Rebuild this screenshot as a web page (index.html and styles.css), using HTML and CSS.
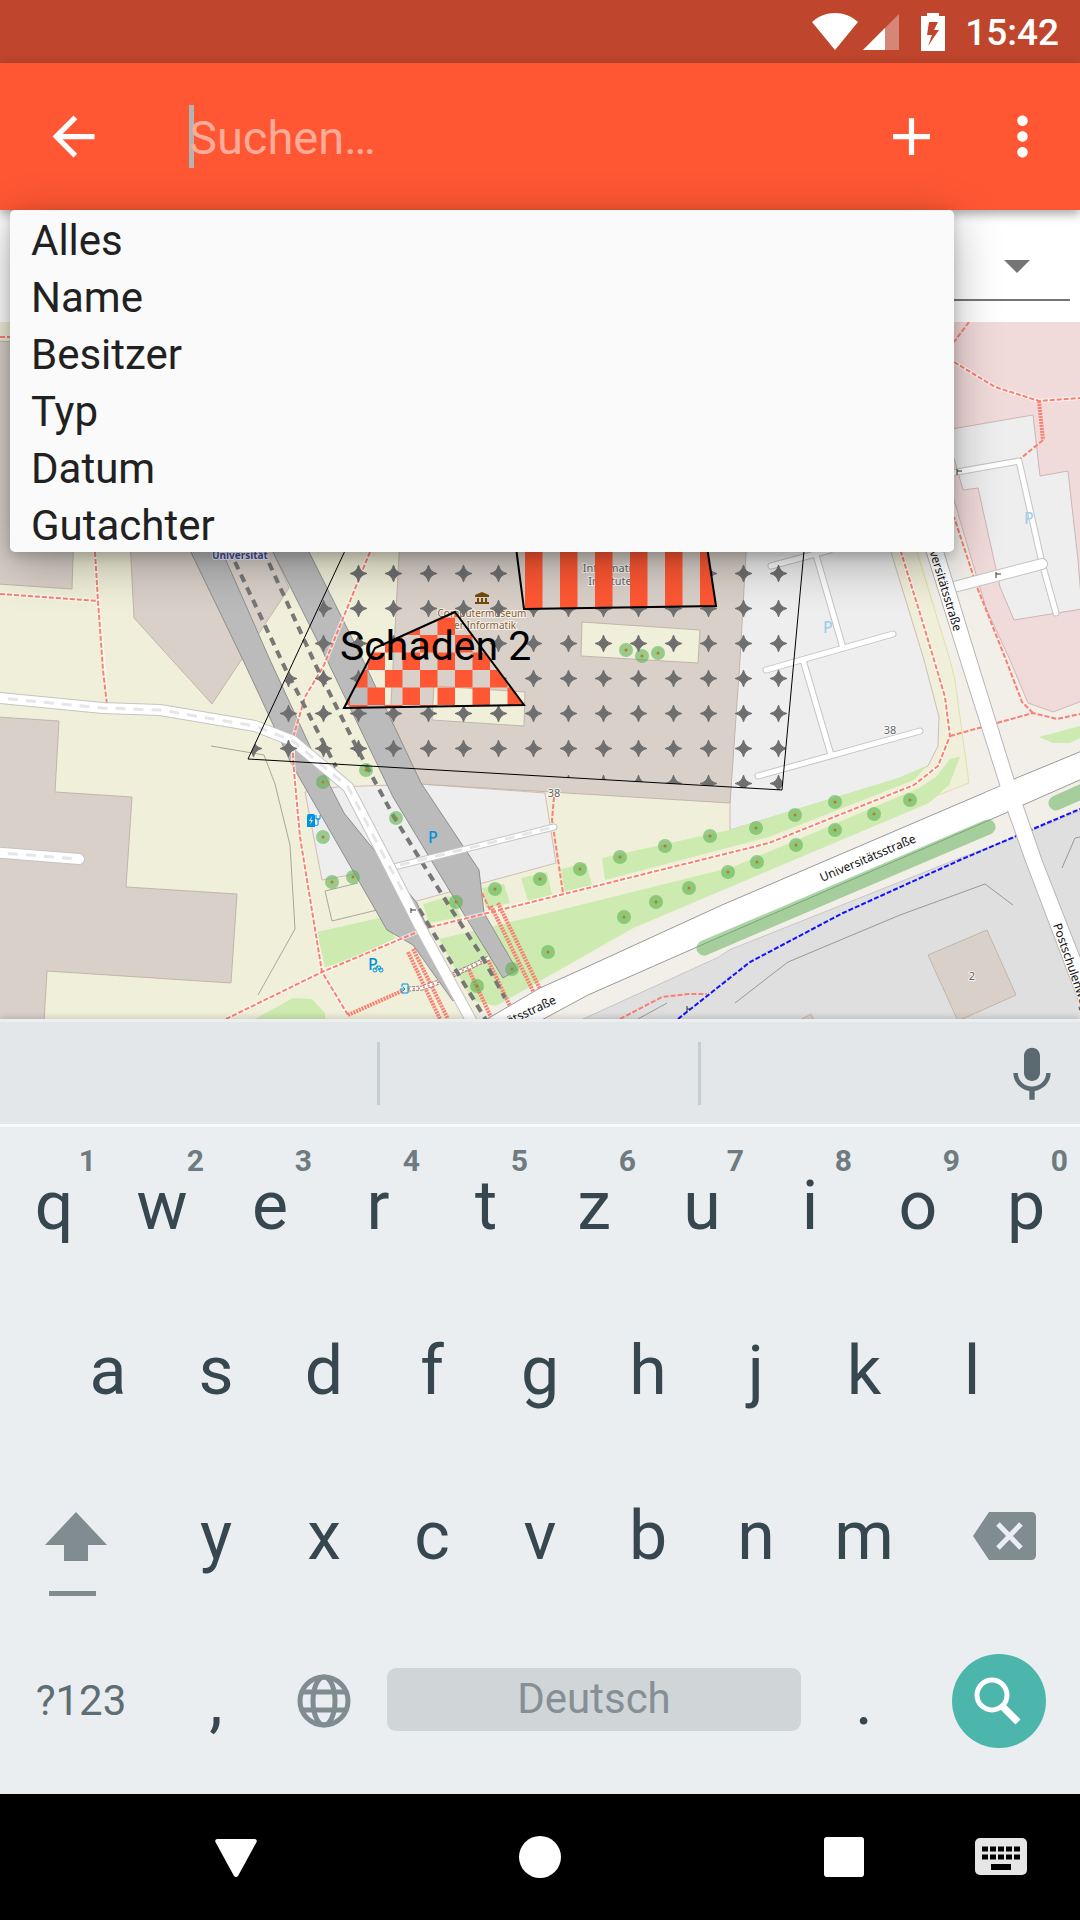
FILE: index.html
```html
<!DOCTYPE html>
<html lang="de">
<head>
<meta charset="utf-8">
<meta name="viewport" content="width=device-width, initial-scale=1">
<title>Suchen</title>
<link rel="stylesheet" href="styles.css">
</head>
<body>
<div class="screen">
  <div class="status">
    <div class="signals">
      <svg width="46" height="38" viewBox="0 0 46 38"><path d="M0 9C13-3 33-3 46 9L23 37z" fill="#fff"/></svg>
      <svg width="36" height="38" viewBox="0 0 36 38"><path d="M0 37L36 1v36z" fill="#fff" opacity=".35"/><path d="M0 37L22 15v22z" fill="#fff"/></svg>
    </div>
    <svg class="battery" width="24" height="38" viewBox="0 0 24 38"><path fill="#fff" fill-rule="evenodd" d="M6 0h12v3h6v35H0V3h6zM8 9L6 22h5L7 33 18 17h-5l4-8z"/></svg>
    <span class="clock">15:42</span>
  </div>

  <header class="toolbar">
    <button class="tool back" aria-label="Zurück"><svg viewBox="0 0 24 24"><path d="M20 11H7.83l5.59-5.59L12 4l-8 8 8 8 1.41-1.41L7.83 13H20v-2z"/></svg></button>
    <input class="search" type="text" placeholder="Suchen…" aria-label="Suchen">
    <button class="tool" aria-label="Hinzufügen"><svg viewBox="0 0 24 24"><path d="M19 13h-6v6h-2v-6H5v-2h6V5h2v6h6v2z"/></svg></button>
    <button class="tool" aria-label="Mehr"><svg viewBox="0 0 24 24"><path d="M12 8c1.1 0 2-.9 2-2s-.9-2-2-2-2 .9-2 2 .9 2 2 2zm0 2c-1.100 0-2 .9-2 2s.9 2 2 2 2-.9 2-2-.9-2-2-2zm0 6c-1.100 0-2 .9-2 2s.9 2 2 2 2-.9 2-2-.9-2-2-2z"/></svg></button>
  </header>

  <div class="filter">
    <select class="spinner" aria-label="Suchfeld">
      <option>Alles</option><option>Name</option><option>Besitzer</option><option>Typ</option><option>Datum</option><option>Gutachter</option>
    </select>
    <svg class="caret" width="26" height="13" viewBox="0 0 26 13"><path d="M0 0h26L13 13z" fill="#757575"/></svg>
    <ul class="popup" role="listbox" aria-label="Suchfeld">
      <li role="option">Alles</li>
      <li role="option">Name</li>
      <li role="option">Besitzer</li>
      <li role="option">Typ</li>
      <li role="option">Datum</li>
      <li role="option">Gutachter</li>
    </ul>
  </div>

  <main class="map">
    <svg class="map-canvas" viewBox="0 322 1080 697" preserveAspectRatio="xMidYMin slice">
      <defs>
        <pattern id="stars" x="26" y="31" width="35" height="35" patternUnits="userSpaceOnUse"><path d="M17.500 9Q19 16 26 17.500Q19 19 17.500 26Q16 19 9 17.500Q16 16 17.500 9z" fill="#6f6f6f" stroke="#6f6f6f" stroke-width="1"/></pattern>
        <pattern id="stripes" x="0" y="0" width="35" height="35" patternUnits="userSpaceOnUse"><rect width="17.500" height="35" fill="#ff5733"/></pattern>
        <pattern id="checks" x="0" y="5" width="35" height="35" patternUnits="userSpaceOnUse"><path d="M0 0h17.500v17.500H0zM17.500 17.500H35V35H17.500z" fill="#ff5733"/></pattern>
      </defs>

      <!-- ground -->
      <rect y="322" width="1080" height="697" fill="#f0efd9"/>
      <path fill="#f2efe9" d="M905 500L950 660 955 680 969 783 936 796 633 930 540 982 470 1019H1080V322H905z"/>
      <path fill="none" stroke="#dfe0a8" stroke-width="1" d="M917 552L950 660 955 680 969 783 936 796"/>
      <path fill="#dfdfdf" stroke="#c6c6c6" stroke-width="1" d="M583 1019L719 957 729 950 960 858 1029 832 1082 810V1022z"/>
      <path fill="#f1dada" stroke="#d3b6b6" stroke-width="1" d="M940 320H1082V701L1053 712 1028 703 1010 660 986 608 954 500 940 460z"/>
      <path fill="#eee" stroke="#ccb6b6" stroke-width="1" d="M940 431L1033 415 1040 476 1068 471 1078 560 1082 609 1014 620 1000 587 978 488 963 490 954 458 940 440z"/>
      <path fill="#eee" stroke="#d0bdb5" stroke-width="1" d="M747 500H875L891 552 924 660 939 717 938 746 928 766 898 779 730 830 730 803z"/>
      <path fill="#eee" stroke="#d0bdb5" stroke-width="1" d="M305 792L337 787 420 784 545 793 556 863 413 902 361 873 322 880z"/>

      <!-- lawns -->
      <g fill="#cdebb0">
        <path d="M317 932L379 918 396 938 345 962 325 967z"/>
        <path d="M423 904L451 896 461 917 429 923z"/>
        <path d="M482 888L504 884 510 903 486 908z"/>
        <path d="M521 878L547 872 552 895 528 901z"/>
        <path d="M561 869L586 863 592 885 565 892z"/>
        <path d="M602 858L729 830 898 778 927 766 914 780 769 837 605 880z"/>
        <path d="M439 939L540 915 733 867 919 788 936 777 950 759 960 757 949 785 929 803 633 928 540 981 496 1006 472 1000z"/>
        <path d="M255 1019L293 998 312 999 325 1013V1019z"/>
        <path d="M1039 737L1080 726V738L1070 743 1053 743z"/>
      </g>

      <!-- buildings -->
      <g fill="#d9d0c9" stroke="#c2b5aa" stroke-width="1">
        <path d="M-2 341L80 346 72 589-2 584z"/>
        <path d="M130 540H268L289 588 212 704 134 618z"/>
        <path d="M-2 717L59 721 55 792 132 797 126 887 237 894 231 983 47 971 44 1022H-2z"/>
        <path d="M402 500H749L740 660 730 803 420 784 385 780 391 703z"/>
        <path d="M987 930L1016 995 958 1021 928 955z"/>
        <path d="M800 1020L811 1014 814 1020z"/>
      </g>
      <g fill="#f0efd9" stroke="#c2b5aa" stroke-width="1">
        <path d="M582 622L700 630 698 663 581 656z"/>
        <path d="M434 686L525 692 524 726 432 720z"/>
      </g>

      <!-- field lines -->
      <g fill="none" stroke="#a9a899" stroke-width="1">
        <path d="M211 746L264 755 275 784 290 845 295 929 258 995"/>
        <path d="M358 883L325 891 332 921 377 910"/>
        <path stroke="#999" d="M1013 905L985 884 900 915 788 962 735 1003M1080 837L1075 838 1062 868M667 1003L638 1019"/>
      </g>

      <!-- tram beds -->
      <g fill="#bbb" stroke="#8f8f8f" stroke-width="1">
        <path d="M185 540L243 660 291 763 387 930 413 945 453 1001 456 998 417 903 344 813 313 753 270 660 217 540z"/>
        <path d="M267 540L327 660 393 797 451 893 503 978 517 970 484 913 479 870 421 783 363 660 303 540z"/>
      </g>

      <!-- foot paths -->
      <g fill="none" stroke="#fff" stroke-opacity=".6" stroke-width="4">
        <path d="M954 362L995 387 1039 401 1080 398M901 552L922 620 945 697 950 736 938 766 914 785 769 843 540 900 427 928 322 972 226 1019M370 552L324 665 305 697 293 738 293 760 300 837 322 972 348 1015M95 552L98 601 107 705M0 594L98 601"/>
      </g>
      <g fill="none" stroke="#fa8072" stroke-width="2" stroke-dasharray="5 2">
        <path d="M969 322L954 342M954 362L995 387 1039 401 1080 398"/>
        <path d="M1043 440L1020 459"/>
        <path d="M889 510L901 552 922 620 934 660 945 697 950 736 938 766 914 785 769 843 540 900 427 928 322 972 226 1019"/>
        <path d="M950 736L1033 713 1057 719 1080 714M1033 713L1022 702 1006 660 977 587 954 517"/>
        <path d="M0 337H12M0 594L98 601M95 552L98 601 103 670 107 705"/>
        <path d="M370 552L324 665 305 697 293 738 293 760 300 837 322 972 348 1015"/>
        <path d="M554 797L552 820 563 893M620 1019L662 997 688 994 707 994M482 893L490 910"/>
      </g>
      <g fill="none" stroke="#fa8072" stroke-width="4" stroke-dasharray="2 1">
        <path d="M1039 401L1043 440M408 952L440 1019M413 949L448 1019M491 906L534 993M498 903L540 989M348 1015L402 991M488 960L510 1006M469 970L491 1017"/>
      </g>
      <g fill="none">
        <path d="M453 975L489 958M408 989L422 988 439 982" stroke="#888" stroke-width="5" stroke-dasharray="3 1"/>
        <path d="M453 975L489 958M408 989L422 988 439 982" stroke="#fff" stroke-width="3"/>
        <path d="M453 975L489 958M408 989L422 988 439 982" stroke="#fa8072" stroke-width="2" stroke-dasharray="2 3"/>
      </g>
      <path fill="none" stroke="#11f" stroke-width="2" stroke-dasharray="5 2" d="M678 1019L750 962 843 913 960 860 1080 809"/>
      <g fill="none" stroke="#777" stroke-width="4" stroke-dasharray="8 6">
        <path d="M235 562L286 670 336 767M419 909L486 1020"/>
        <path d="M269 563L317 668 358 750 394 817 423 864 453 912 480 953 505 998"/>
      </g>

      <!-- streets -->
      <g fill="none" stroke-linecap="round" stroke-linejoin="round">
        <path stroke="#c4c4c4" stroke-width="7" d="M771 566L830 550M816 555L843 648M893 634L766 670M803 660L831 755M758 776L920 731M394 867L554 827M940 475L1019 461 1042 563 1056 613"/>
        <path stroke="#fff" stroke-width="5" d="M771 566L830 550M816 555L843 648M893 634L766 670M803 660L831 755M758 776L920 731M394 867L554 827M940 475L1019 461 1042 563 1056 613"/>
        <path stroke="#c4c4c4" stroke-width="12" d="M950 588L1042 564M-10 697L103 708 160 710 255 726 293 741 348 787 386 860 418 923 472 1022M-10 852L79 859"/>
        <path stroke="#fff" stroke-width="10" d="M950 588L1042 564M-10 697L103 708 160 710 255 726 293 741 348 787 386 860 418 923 472 1022M-10 852L79 859"/>
        <path stroke="#e6e6e6" stroke-width="3" stroke-linecap="butt" stroke-dasharray="10 8" d="M-10 697L103 708 160 710 255 726 293 741 348 787 386 860 406 897M-10 852L79 859M400 865L550 828"/>
      </g>
      <path fill="#fff" stroke="#999" stroke-width="1" d="M487 1019L540 988 578 971 722 905 1000 786 1014 779 1082 751V779L1023 805 1008 812 722 936 588 995 538 1022z"/>
      <path fill="#fff" stroke="#b5b5b5" stroke-width="1" d="M913 510L960 660 1000 786 1008 812 1025 860 1082 1010V962L1042 860 1023 805 1014 779 977 660 931 510z"/>
      <path fill="#fff" d="M985 793L1028 774 1037 798 995 816z"/>
      <g stroke="#5fae57" stroke-opacity=".52" stroke-linecap="round" stroke-width="15">
        <path d="M704 948L988 827M1056 803L1090 788"/>
      </g>

      <!-- trees -->
      <g fill="#5cb050" fill-opacity=".58">
        <circle cx="620" cy="857" r="7"/><circle cx="665" cy="846" r="7"/><circle cx="710" cy="836" r="7"/><circle cx="756" cy="828" r="7"/><circle cx="795" cy="815" r="7"/><circle cx="835" cy="802" r="7"/><circle cx="580" cy="869" r="7"/><circle cx="540" cy="879" r="7"/><circle cx="624" cy="917" r="7"/><circle cx="656" cy="902" r="7"/><circle cx="689" cy="888" r="7"/><circle cx="728" cy="872" r="7"/><circle cx="757" cy="862" r="7"/><circle cx="796" cy="845" r="7"/><circle cx="835" cy="830" r="7"/><circle cx="874" cy="814" r="7"/><circle cx="910" cy="800" r="7"/><circle cx="548" cy="952" r="7"/><circle cx="323" cy="782" r="7"/><circle cx="366" cy="770" r="7"/><circle cx="396" cy="818" r="7"/><circle cx="323" cy="837" r="7"/><circle cx="332" cy="882" r="7"/><circle cx="353" cy="877" r="7"/><circle cx="456" cy="902" r="7"/><circle cx="495" cy="889" r="7"/><circle cx="512" cy="969" r="7"/><circle cx="477" cy="986" r="7"/><circle cx="626" cy="650" r="7"/><circle cx="642" cy="656" r="7"/><circle cx="658" cy="653" r="7"/>
      </g>
      <path stroke="#b27a35" stroke-width="3" stroke-linecap="round" d="M620 857h0M665 846h0M710 836h0M756 828h0M795 815h0M835 802h0M580 869h0M540 879h0M624 917h0M656 902h0M689 888h0M728 872h0M757 862h0M796 845h0M835 830h0M874 814h0M910 800h0M548 952h0M323 782h0M366 770h0M396 818h0M323 837h0M332 882h0M353 877h0M456 902h0M495 889h0M512 969h0M477 986h0M626 650h0M642 656h0M658 653h0"/>

      <!-- map labels and signs -->
      <g class="label">
        <text x="822" y="882" transform="rotate(-23 822 882)">Universitätsstraße</text>
        <text x="954" y="632" text-anchor="end" transform="rotate(73 954 632)">Universitätsstraße</text>
        <text x="557" y="1003" text-anchor="end" transform="rotate(-25 557 1003)">Universitätsstraße</text>
        <text x="1053" y="925" transform="rotate(71 1053 925)">Postschulenweg</text>
      </g>
      <g class="label grey" text-anchor="middle">
        <text x="890" y="734">38</text><text x="554" y="797">38</text><text x="972" y="980">2</text>
        <text x="610" y="572">Informatik</text><text x="610" y="585">Institute</text>
      </g>
      <text class="label station" x="240" y="559" text-anchor="middle">Universität</text>
      <g class="label museum" text-anchor="middle"><text x="482" y="617">Computermuseum</text><text x="482" y="629">der Informatik</text></g>
      <path fill="#734a08" d="M475 595L482 592 489 595V597H475zM477 598h2v4h-2zM481 598h2v4h-2zM485 598h2v4h-2zM475 602h14v2h-14z"/>
      <g class="parking" text-anchor="middle"><text x="433" y="843">P</text><text x="373" y="970">P</text><text class="faded" x="1029" y="524">P</text><text class="faded" x="828" y="633">P</text></g>
      <g fill="none" stroke="#0092da" stroke-width="1"><circle cx="375" cy="970" r="2"/><circle cx="381" cy="970" r="2"/><path d="M375 970L377 966H380L381 970M377 966L379 970"/></g>
      <path fill="none" stroke="#0092da" stroke-width="1" d="M402 987v-3h6v9h-6v-3M400 989h5M403 987l2 2-2 2"/>
      <path fill="#0092da" fill-rule="evenodd" d="M307 816q0-2 2-2h4q2 0 2 2v11h-8zM312 816l-3 5h2l-1 4 3-5h-2z"/>
      <path fill="none" stroke="#0092da" stroke-width="1" d="M315 825q4 2 3-3v-3M316 815v4h4v-4M317 819h2"/>
      <path fill="none" stroke="#333" stroke-width="1" d="M957 469v6M957 471h5M996 572v6M996 574h5M411 908v5M411 910h5M687 1006v6M687 1009h4"/>

      <!-- damage areas -->
      <path fill="url(#stars)" fill-rule="evenodd" d="M346 552L248 759 782 790 804 552zM517 552L524 609 716 606 708 552zM455 612L375 648 344 708 524 705z"/>
      <path fill="none" stroke="#000" stroke-width="1" d="M350 540L248 759 782 790 805 540"/>
      <path fill="url(#stripes)" stroke="#000" stroke-width="2" d="M515 540L524 609 716 606 706 540z"/>
      <path fill="url(#checks)" stroke="#000" stroke-width="2" d="M455 612L375 648 344 708 524 705z"/>
      <text class="damage" x="340" y="660">Schaden 2</text>
    </svg>
  </main>

  <section class="keyboard" aria-label="Tastatur">
    <div class="suggest">
      <button class="word" aria-label="Vorschlag 1"></button>
      <button class="word" aria-label="Vorschlag 2"></button>
      <button class="word voice" aria-label="Spracheingabe"><svg width="64" height="64" viewBox="0 0 24 24" fill="#5a6a70"><path d="M12 15c1.660 0 3-1.340 3-3V5.500c0-1.660-1.340-3-3-3s-3 1.340-3 3V12c0 1.660 1.340 3 3 3zm5.300-3c0 3-2.540 5.100-5.300 5.100S6.700 15 6.700 12H5c0 3.410 2.720 6.230 6 6.720V22h2v-3.280c3.280-.48 6-3.300 6-6.720h-1.700z"/></svg></button>
    </div>
    <div class="keys">
      <div class="row">
        <button class="key">q<span class="hint">1</span></button><button class="key">w<span class="hint">2</span></button><button class="key">e<span class="hint">3</span></button><button class="key">r<span class="hint">4</span></button><button class="key">t<span class="hint">5</span></button><button class="key">z<span class="hint">6</span></button><button class="key">u<span class="hint">7</span></button><button class="key">i<span class="hint">8</span></button><button class="key">o<span class="hint">9</span></button><button class="key">p<span class="hint">0</span></button>
      </div>
      <div class="row inset">
        <button class="key">a</button><button class="key">s</button><button class="key">d</button><button class="key">f</button><button class="key">g</button><button class="key">h</button><button class="key">j</button><button class="key">k</button><button class="key">l</button>
      </div>
      <div class="row">
        <button class="key wide shift" aria-label="Umschalt"><svg width="62" height="120" viewBox="0 0 62 120" fill="#808c90"><path d="M31 36L62 69H43V85H19V69H0zM4 115H51V120H4z"/></svg></button>
        <button class="key">y</button><button class="key">x</button><button class="key">c</button><button class="key">v</button><button class="key">b</button><button class="key">n</button><button class="key">m</button>
        <button class="key wide delete" aria-label="Löschen"><svg width="63" height="48" viewBox="0 0 63 48"><path fill="#808c90" d="M16 0H58Q63 0 63 5V43Q63 48 58 48H16L0 24z"/><path fill="none" stroke="#ebeef1" stroke-width="5" d="M25 12L48 36M48 12L25 36"/></svg></button>
      </div>
      <div class="row">
        <button class="key wide small">?123</button>
        <button class="key">,</button>
        <button class="key" aria-label="Sprache"><svg width="54" height="54" viewBox="0 0 54 54" fill="none" stroke="#808c90" stroke-width="5"><circle cx="27" cy="27" r="24"/><ellipse cx="27" cy="27" rx="11" ry="24"/><path d="M5 18H49M5 36H49"/></svg></button>
        <button class="key space">Deutsch</button>
        <button class="key">.</button>
        <button class="key wide" aria-label="Suchen"><svg width="94" height="94" viewBox="0 0 94 94"><circle cx="47" cy="47" r="47" fill="#4db6ac"/><circle cx="40" cy="41" r="15" fill="none" stroke="#fff" stroke-width="5"/><path d="M50 52L66 68" stroke="#fff" stroke-width="7"/></svg></button>
      </div>
    </div>
  </section>

  <nav class="nav">
    <button class="nav-back" aria-label="Zurück"><svg width="42" height="42" viewBox="0 0 42 42"><path fill="#fff" d="M2 3H40Q43 4 41 7L23 40Q21 42 19 40L1 7Q-1 4 2 3z"/></svg></button>
    <button class="nav-home" aria-label="Startseite"><svg width="42" height="42" viewBox="0 0 42 42"><circle cx="21" cy="21" r="21" fill="#fff"/></svg></button>
    <button class="nav-recent" aria-label="Übersicht"><svg width="40" height="40" viewBox="0 0 40 40"><rect width="40" height="40" rx="3" fill="#fff"/></svg></button>
    <button class="nav-ime" aria-label="Tastatur wechseln"><svg width="52" height="38" viewBox="0 0 52 38"><rect width="52" height="37" rx="5" fill="#e6e6e6"/><path stroke="#000" stroke-width="5" stroke-dasharray="6 2" d="M7 11H45M7 19H45"/><path fill="#000" d="M16 26h20v6H16z"/></svg></button>
  </nav>
</div>
</body>
</html>
```
FILE: styles.css
```css
* { box-sizing: border-box; }

body {
  margin: 0;
  font-family: Roboto, "Noto Sans", sans-serif;
}

button {
  border: 0;
  padding: 0;
  background: none;
  font: inherit;
  color: inherit;
}

svg { display: block; }

.screen {
  display: flex;
  flex-direction: column;
  min-height: 100vh;
  background: #fff;
}

/* status bar */
.status {
  display: flex;
  align-items: center;
  justify-content: flex-end;
  height: 63px;
  padding-right: 21px;
  background: #bf462d;
}
.signals { display: flex; gap: 5px; }
.battery { margin: 0 20px 0 22px; }
.clock {
  padding-top: 3px;
  font-size: 37px;
  font-weight: 500;
  line-height: 42px;
  color: #fff;
}

/* search bar */
.toolbar {
  position: relative;
  z-index: 1;
  display: flex;
  align-items: center;
  gap: 48px;
  height: 147px;
  padding: 0 26px 0 42px;
  background: #ff5733;
  box-shadow: 0 4px 10px rgba(0, 0, 0, .35);
}
.tool { width: 63px; height: 63px; }
.tool svg { width: 63px; height: 63px; fill: #fff; }
.back { margin-right: 36px; }
.search {
  flex: 1;
  min-width: 0;
  height: 63px;
  border: 0;
  padding: 2px 0 0;
  outline: 0;
  background: linear-gradient(#b3b3b3, #b3b3b3) left / 5px 63px no-repeat;
  font: 47px/61px Roboto, sans-serif;
  color: #fff;
}
.search::placeholder { color: #ffab99; opacity: 1; }

/* field filter */
.filter {
  position: relative;
  height: 112px;
  padding: 0 10px 21px;
}
.spinner {
  width: 100%;
  height: 91px;
  border: 0;
  border-bottom: 2px solid #757575;
  border-radius: 0;
  padding: 0 20px;
  appearance: none;
  background: #fff;
  font: 42px/57px Roboto, sans-serif;
  color: #212121;
}
.caret {
  position: absolute;
  top: 50px;
  right: 50px;
  pointer-events: none;
}
.popup {
  position: absolute;
  z-index: 2;
  top: 0;
  left: 10px;
  right: 126px;
  margin: 0;
  padding: 0;
  list-style: none;
  border-radius: 5px;
  background: #fafafa;
  box-shadow: 0 12px 48px rgba(0, 0, 0, .3), 0 4px 12px rgba(0, 0, 0, .18);
}
.popup li {
  padding: 4px 21px 0;
  font-size: 42px;
  line-height: 53px;
  color: #212121;
}

/* map */
.map {
  position: relative;
  flex: 1 0 697px;
  overflow: hidden;
}
.map-canvas {
  position: absolute;
  inset: 0;
  width: 100%;
  height: 100%;
}
.label {
  font-family: "Noto Sans", sans-serif;
  font-size: 12px;
  fill: #111;
  stroke: #fff;
  stroke-width: 2px;
  stroke-opacity: .7;
  paint-order: stroke;
}
.grey { font-size: 11px; fill: #666; }
.station { font-size: 10px; font-weight: 700; fill: #3f4fa8; }
.museum { font-size: 10px; fill: #8a622a; }
.parking {
  font-family: "Noto Sans", sans-serif;
  font-size: 16px;
  font-weight: 500;
  fill: #0092da;
}
.faded { fill: #9fcfea; }
.damage { font-size: 41px; fill: #000; }

/* keyboard */
.keyboard {
  position: relative;
  background: #ebeef1;
  box-shadow: 0 -2px 6px rgba(0, 0, 0, .15);
  color: #37474f;
}
.suggest {
  display: grid;
  grid-template-columns: 380fr 321fr 379fr;
  align-items: center;
  height: 108px;
  border-top: 3px solid #eceff0;
  border-bottom: 3px solid #f7f9fa;
  background: #e3e7ea;
}
.word {
  height: 63px;
  border-right: 3px solid #c8cdd0;
}
.voice {
  display: flex;
  align-items: center;
  justify-content: flex-end;
  border: 0;
  padding-right: 16px;
}
.keys {
  display: grid;
  gap: 11px;
  padding-bottom: 18px;
}
.row {
  display: flex;
  height: 154px;
}
.inset { padding: 0 5%; }
.key {
  position: relative;
  flex: 108 1 0;
  display: flex;
  align-items: center;
  justify-content: center;
  padding-top: 3px;
  font-size: 68px;
  line-height: 80px;
}
.wide { flex-grow: 162; }
.hint {
  position: absolute;
  top: 16px;
  right: 12px;
  font-size: 30px;
  font-weight: 700;
  line-height: 36px;
  color: #6e7b80;
}
.shift svg { margin-right: 10px; }
.delete svg { margin-left: 10px; }
.small { font-size: 42px; color: #5e6e75; }
.space {
  flex-grow: 414;
  align-self: center;
  height: 63px;
  margin: 0 9px;
  padding: 0;
  border-radius: 9px;
  background: #d0d5d8;
  font-size: 42px;
  color: #868f95;
}

/* navigation bar */
.nav {
  display: grid;
  grid-template-columns: 84fr 304fr 304fr 74fr 156fr 158fr;
  height: 126px;
  background: #000;
}
.nav button { display: grid; place-items: center; }
.nav-back { grid-column: 2; }
.nav-home { grid-column: 3; }
.nav-recent { grid-column: 5; }
.nav-ime { grid-column: 6; }
```
